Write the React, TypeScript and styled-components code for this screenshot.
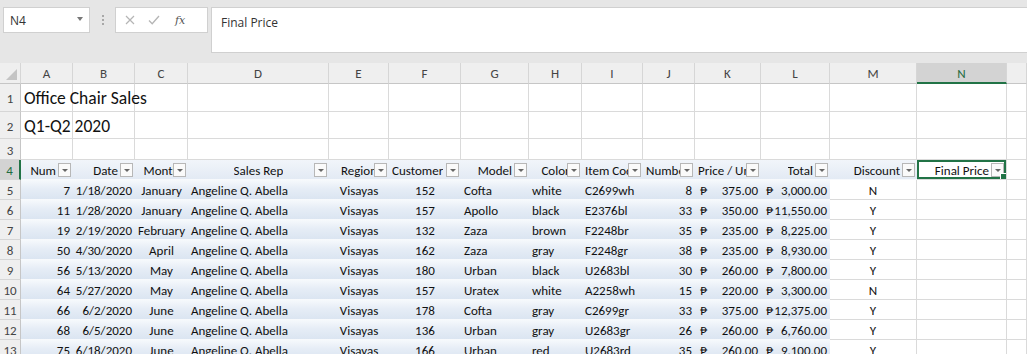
import React from "react";
import styled, { createGlobalStyle, css } from "styled-components";

const GlobalStyle = createGlobalStyle`
  html, body { margin: 0; padding: 0; background: #ffffff; }
  body { font-family: "Carlito", "Lato", "Open Sans", sans-serif; overflow: hidden; }
  * { box-sizing: border-box; }
`;

const COLS = "21px 52px 62px 53px 141px 60px 72px 68px 53px 61px 52px 66px 69px 87px 90px 1fr";

const Page = styled.div`
  width: 1027px;
  height: 354px;
  overflow: hidden;
  display: flex;
  flex-direction: column;
  background: #ffffff;
`;

const TopBar = styled.div`
  height: 63px;
  flex: none;
  background: #e6e6e6;
  display: flex;
  align-items: flex-start;
  padding: 7px 0 0 3px;
  font-family: "Open Sans", "Lato", sans-serif;
`;

const NameBox = styled.div`
  width: 87px;
  height: 26px;
  background: #ffffff;
  border: 1px solid #d0d0d0;
  display: flex;
  align-items: center;
  justify-content: space-between;
  padding: 0 6px 0 6px;
  font-size: 12px;
  color: #333;
`;

const Caret = styled.span`
  width: 0;
  height: 0;
  border-left: 3px solid transparent;
  border-right: 3px solid transparent;
  border-top: 4px solid #777;
  margin-top: -3px;
`;

const Grip = styled.div`
  width: 25px;
  height: 26px;
  display: flex;
  flex-direction: column;
  align-items: center;
  justify-content: center;
  gap: 2px;
  span {
    width: 2px;
    height: 2px;
    background: #a8a8a8;
  }
`;

const FxBox = styled.div`
  width: 93px;
  height: 26px;
  background: #ffffff;
  border: 1px solid #d0d0d0;
  display: flex;
  align-items: center;
  padding-left: 9px;
  gap: 13px;
  color: #b5b5b5;
`;

const FxLabel = styled.span`
  font-family: "DejaVu Serif", "Liberation Serif", serif;
  font-style: italic;
  font-size: 11px;
  color: #555;
  margin-left: 2px;
`;

const FormulaInput = styled.div`
  flex: 1;
  height: 46px;
  margin-left: 3px;
  background: #ffffff;
  border: 1px solid #d0d0d0;
  border-right: none;
  padding: 6px 0 0 9px;
  font-size: 12px;
  color: #333;
`;

const Sheet = styled.div`
  display: flex;
  flex-direction: column;
`;

const Row = styled.div<{ $h: number }>`
  display: grid;
  grid-template-columns: ${COLS};
  height: ${(p) => p.$h}px;
  flex: none;
`;

const ColHead = styled.div<{ $sel?: boolean }>`
  background: ${(p) => (p.$sel ? "#d3d3d3" : "#efefef")};
  border-right: 1px solid #d6d6d6;
  border-bottom: ${(p) => (p.$sel ? "2px solid #217346" : "1px solid #c6c6c6")};
  color: ${(p) => (p.$sel ? "#1e6b40" : "#444")};
  font-size: 13px;
  display: flex;
  align-items: center;
  justify-content: center;
  padding-top: ${(p) => (p.$sel ? "1px" : "0")};
`;

const Corner = styled.div`
  background: #efefef;
  border-right: 1px solid #d6d6d6;
  border-bottom: 1px solid #c6c6c6;
  position: relative;
  &::after {
    content: "";
    position: absolute;
    right: 3px;
    bottom: 3px;
    width: 0;
    height: 0;
    border-left: 11px solid transparent;
    border-bottom: 11px solid #c4c4c4;
  }
`;

const RowHead = styled.div<{ $sel?: boolean }>`
  background: ${(p) => (p.$sel ? "#d3d3d3" : "#efefef")};
  border-right: ${(p) => (p.$sel ? "2px solid #217346" : "1px solid #c6c6c6")};
  border-bottom: 1px solid #d6d6d6;
  color: ${(p) => (p.$sel ? "#1e6b40" : "#444")};
  font-size: 13px;
  display: flex;
  align-items: center;
  justify-content: center;
  padding-top: 2px;
`;

type Align = "left" | "center" | "right";
type Fill = "plain" | "band" | "head";

const fillCss = {
  plain: css`
    background: #ffffff;
    border-right: 1px solid #dadada;
    border-bottom: 1px solid #dadada;
  `,
  band: css`
    background: linear-gradient(to bottom, #f6f9fc 0%, #e6edf6 45%, #dbe5f1 100%);
    border-bottom: 1px solid #f7f9fc;
  `,
  head: css`
    background: linear-gradient(to bottom, #f1f5fa 0%, #e3eaf4 100%);
    border-bottom: 1px solid #f7f9fc;
  `,
};

const Cell = styled.div<{ $align?: Align; $fill?: Fill; $size?: number }>`
  position: relative;
  ${(p) => fillCss[p.$fill || "plain"]};
  font-size: ${(p) => p.$size || 13}px;
  color: #111;
  white-space: nowrap;
  overflow: hidden;
  display: flex;
  align-items: center;
  justify-content: ${(p) =>
    p.$align === "right" ? "flex-end" : p.$align === "center" ? "center" : "flex-start"};
  padding: 1px 3px 0 3px;
`;

const Title = styled.span`
  overflow: visible;
`;

const Overflow = styled(Cell)`
  overflow: visible;
  z-index: 1;
`;

const HeadLabel = styled.span<{ $pad?: boolean }>`
  padding-right: ${(p) => (p.$pad ? "14px" : "0")};
  overflow: hidden;
`;

const FilterBtn = styled.span`
  position: absolute;
  right: 2px;
  top: 3px;
  width: 13px;
  height: 14px;
  background: #fafafa;
  border: 1px solid #b7b7b7;
  display: flex;
  align-items: center;
  justify-content: center;
  &::after {
    content: "";
    width: 0;
    height: 0;
    border-left: 3px solid transparent;
    border-right: 3px solid transparent;
    border-top: 3px solid #666;
  }
`;

const Selection = styled.span`
  position: absolute;
  inset: 0;
  border: 2px solid #217346;
  pointer-events: none;
  &::after {
    content: "";
    position: absolute;
    right: -3px;
    bottom: -3px;
    width: 5px;
    height: 5px;
    background: #217346;
    border: 1px solid #ffffff;
  }
`;

const Acct = styled.span`
  display: flex;
  width: 100%;
  justify-content: space-between;
  padding-left: 2px;
`;

const letters = ["A", "B", "C", "D", "E", "F", "G", "H", "I", "J", "K", "L", "M", "N", ""];

type HeadDef = { label: string; align: Align; pad?: boolean };
const heads: HeadDef[] = [
  { label: "Num", align: "right", pad: true },
  { label: "Date", align: "right", pad: true },
  { label: "Month", align: "center" },
  { label: "Sales Rep", align: "center" },
  { label: "Region", align: "center" },
  { label: "Customer", align: "left" },
  { label: "Model", align: "right", pad: true },
  { label: "Color", align: "center" },
  { label: "Item Code", align: "left" },
  { label: "Number", align: "left" },
  { label: "Price / Unit", align: "left" },
  { label: "Total", align: "right", pad: true },
  { label: "Discount", align: "right", pad: true },
  { label: "Final Price", align: "right", pad: true },
];

type Rec = [string, string, string, string, string, string, string, string, string, string, string, string, string];
const data: Rec[] = [
  ["7", "1/18/2020", "January", "Angeline Q. Abella", "Visayas", "152", "Cofta", "white", "C2699wh", "8", "375.00", "3,000.00", "N"],
  ["11", "1/28/2020", "January", "Angeline Q. Abella", "Visayas", "157", "Apollo", "black", "E2376bl", "33", "350.00", "11,550.00", "Y"],
  ["19", "2/19/2020", "February", "Angeline Q. Abella", "Visayas", "132", "Zaza", "brown", "F2248br", "35", "235.00", "8,225.00", "Y"],
  ["50", "4/30/2020", "April", "Angeline Q. Abella", "Visayas", "162", "Zaza", "gray", "F2248gr", "38", "235.00", "8,930.00", "Y"],
  ["56", "5/13/2020", "May", "Angeline Q. Abella", "Visayas", "180", "Urban", "black", "U2683bl", "30", "260.00", "7,800.00", "Y"],
  ["64", "5/27/2020", "May", "Angeline Q. Abella", "Visayas", "157", "Uratex", "white", "A2258wh", "15", "220.00", "3,300.00", "N"],
  ["66", "6/2/2020", "June", "Angeline Q. Abella", "Visayas", "178", "Cofta", "gray", "C2699gr", "33", "375.00", "12,375.00", "Y"],
  ["68", "6/5/2020", "June", "Angeline Q. Abella", "Visayas", "136", "Urban", "gray", "U2683gr", "26", "260.00", "6,760.00", "Y"],
  ["75", "6/18/2020", "June", "Angeline Q. Abella", "Visayas", "166", "Urban", "red", "U2683rd", "35", "260.00", "9,100.00", "Y"],
];

const dataAlign: Align[] = ["right", "right", "center", "left", "center", "center", "left", "left", "left", "right"];

const PESO = "\u20B1";

const EmptyCells: React.FC<{ from: number; to: number }> = ({ from, to }) => (
  <>
    {Array.from({ length: to - from }, (_, i) => (
      <Cell key={from + i} />
    ))}
  </>
);

export default function App() {
  return (
    <>
      <GlobalStyle />
      <Page>
        <TopBar>
          <NameBox>
            <span>N4</span>
            <Caret />
          </NameBox>
          <Grip>
            <span />
            <span />
            <span />
          </Grip>
          <FxBox>
            <svg width="10" height="10" viewBox="0 0 10 10">
              <path d="M1 1 L9 9 M9 1 L1 9" stroke="#b5b5b5" strokeWidth="1.2" fill="none" />
            </svg>
            <svg width="12" height="10" viewBox="0 0 12 10">
              <path d="M1 5.5 L4.2 8.8 L11 1" stroke="#b5b5b5" strokeWidth="1.3" fill="none" />
            </svg>
            <FxLabel>fx</FxLabel>
          </FxBox>
          <FormulaInput>Final Price</FormulaInput>
        </TopBar>
        <Sheet>
          <Row $h={21}>
            <Corner />
            {letters.map((l, i) => (
              <ColHead key={i} $sel={l === "N"}>
                {l}
              </ColHead>
            ))}
          </Row>
          <Row $h={28}>
            <RowHead>1</RowHead>
            <Overflow $size={17.5}>
              <Title>Office Chair Sales</Title>
            </Overflow>
            <EmptyCells from={1} to={15} />
          </Row>
          <Row $h={27}>
            <RowHead>2</RowHead>
            <Overflow $size={17.5}>
              <Title>Q1-Q2 2020</Title>
            </Overflow>
            <EmptyCells from={1} to={15} />
          </Row>
          <Row $h={21}>
            <RowHead>3</RowHead>
            <EmptyCells from={0} to={15} />
          </Row>
          <Row $h={20}>
            <RowHead $sel>4</RowHead>
            {heads.map((h, i) => (
              <Cell key={i} $fill={i === 13 ? "plain" : "head"} $align={h.align}>
                <HeadLabel $pad={h.pad}>{h.label}</HeadLabel>
                <FilterBtn />
                {i === 13 && <Selection />}
              </Cell>
            ))}
            <Cell />
          </Row>
          {data.map((r, ri) => (
            <Row $h={20} key={ri}>
              <RowHead>{ri + 5}</RowHead>
              {r.slice(0, 10).map((v, ci) => (
                <Cell key={ci} $fill="band" $align={dataAlign[ci]}>
                  {v}
                </Cell>
              ))}
              <Cell $fill="band">
                <Acct>
                  <span>{PESO}</span>
                  <span>{r[10]}</span>
                </Acct>
              </Cell>
              <Cell $fill="band">
                <Acct>
                  <span>{PESO}</span>
                  <span>{r[11]}</span>
                </Acct>
              </Cell>
              <Cell $align="center">{r[12]}</Cell>
              <Cell />
              <Cell />
            </Row>
          ))}
        </Sheet>
      </Page>
    </>
  );
}
